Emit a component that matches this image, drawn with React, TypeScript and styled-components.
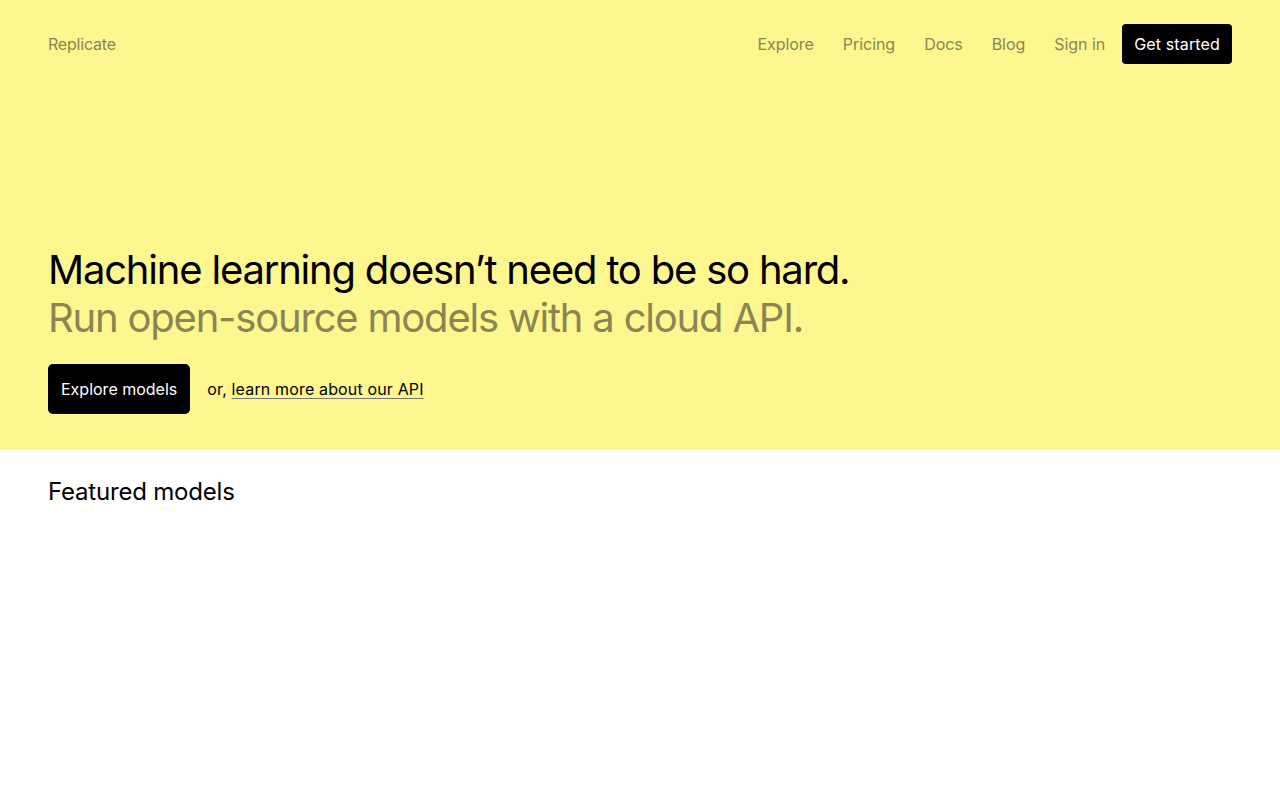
import React from "react";
import styled, { createGlobalStyle } from "styled-components";

const Global = createGlobalStyle`
  html, body { margin: 0; padding: 0; background: #fff; }
  body { font-family: Inter, "Noto Sans", sans-serif; color: #000; -webkit-font-smoothing: antialiased; }
  * { box-sizing: border-box; }
`;

const Hero = styled.section`
  background: #fef78f;
  padding: 24px 48px 36px;
  height: 450px;
  display: flex;
  flex-direction: column;
`;

const Nav = styled.nav`
  display: flex;
  align-items: center;
  justify-content: space-between;
  height: 40px;
`;

const Brand = styled.a`
  font-size: 16px;
  letter-spacing: -0.2px;
  color: #8a8553;
  text-decoration: none;
`;

const Links = styled.div`
  display: flex;
  align-items: center;
  gap: 29px;
`;

const NavLink = styled.a`
  font-size: 16px;
  letter-spacing: -0.05px;
  color: #8a8553;
  text-decoration: none;
`;

const CTA = styled.a`
  margin-left: -12px;
  background: #000;
  color: #fff;
  font-size: 16px;
  letter-spacing: 0.15px;
  height: 40px;
  padding: 0 12px;
  display: flex;
  align-items: center;
  border-radius: 4px;
  text-decoration: none;
`;

const Content = styled.div`
  margin-top: auto;
`;

const Title = styled.h1`
  margin: 0;
  font-size: 40px;
  font-weight: 400;
  line-height: 48px;
  letter-spacing: -1.2px;
`;

const Sub = styled.span`
  display: block;
  color: #8a8553;
`;

const Actions = styled.div`
  display: flex;
  align-items: center;
  gap: 17px;
  margin-top: 22px;
`;

const Primary = styled.a`
  background: #000;
  color: #fff;
  height: 50px;
  padding: 0 13px;
  display: flex;
  align-items: center;
  border-radius: 5px;
  font-size: 16px;
  letter-spacing: 0;
  text-decoration: none;
`;

const Or = styled.span`
  font-size: 16px;
  letter-spacing: 0.15px;
  color: #000;
  a {
    color: #000;
    text-decoration: underline;
    text-decoration-color: #777;
    text-underline-offset: 3px;
  }
`;

const Featured = styled.section`
  padding: 24px 48px;
`;

const FeaturedTitle = styled.h2`
  margin: 0;
  font-size: 24px;
  font-weight: 400;
  line-height: 34px;
  letter-spacing: -0.2px;
  padding-top: 1px;
`;

export default function App() {
  return (
    <>
      <Global />
      <Hero>
        <Nav>
          <Brand href="#">Replicate</Brand>
          <Links>
            <NavLink href="#">Explore</NavLink>
            <NavLink href="#">Pricing</NavLink>
            <NavLink href="#">Docs</NavLink>
            <NavLink href="#">Blog</NavLink>
            <NavLink href="#">Sign in</NavLink>
            <CTA href="#">Get started</CTA>
          </Links>
        </Nav>
        <Content>
          <Title>
            Machine learning doesn’t need to be so hard.
            <Sub>Run open-source models with a cloud API.</Sub>
          </Title>
          <Actions>
            <Primary href="#">Explore models</Primary>
            <Or>
              or, <a href="#">learn more about our API</a>
            </Or>
          </Actions>
        </Content>
      </Hero>
      <Featured>
        <FeaturedTitle>Featured models</FeaturedTitle>
      </Featured>
    </>
  );
}
